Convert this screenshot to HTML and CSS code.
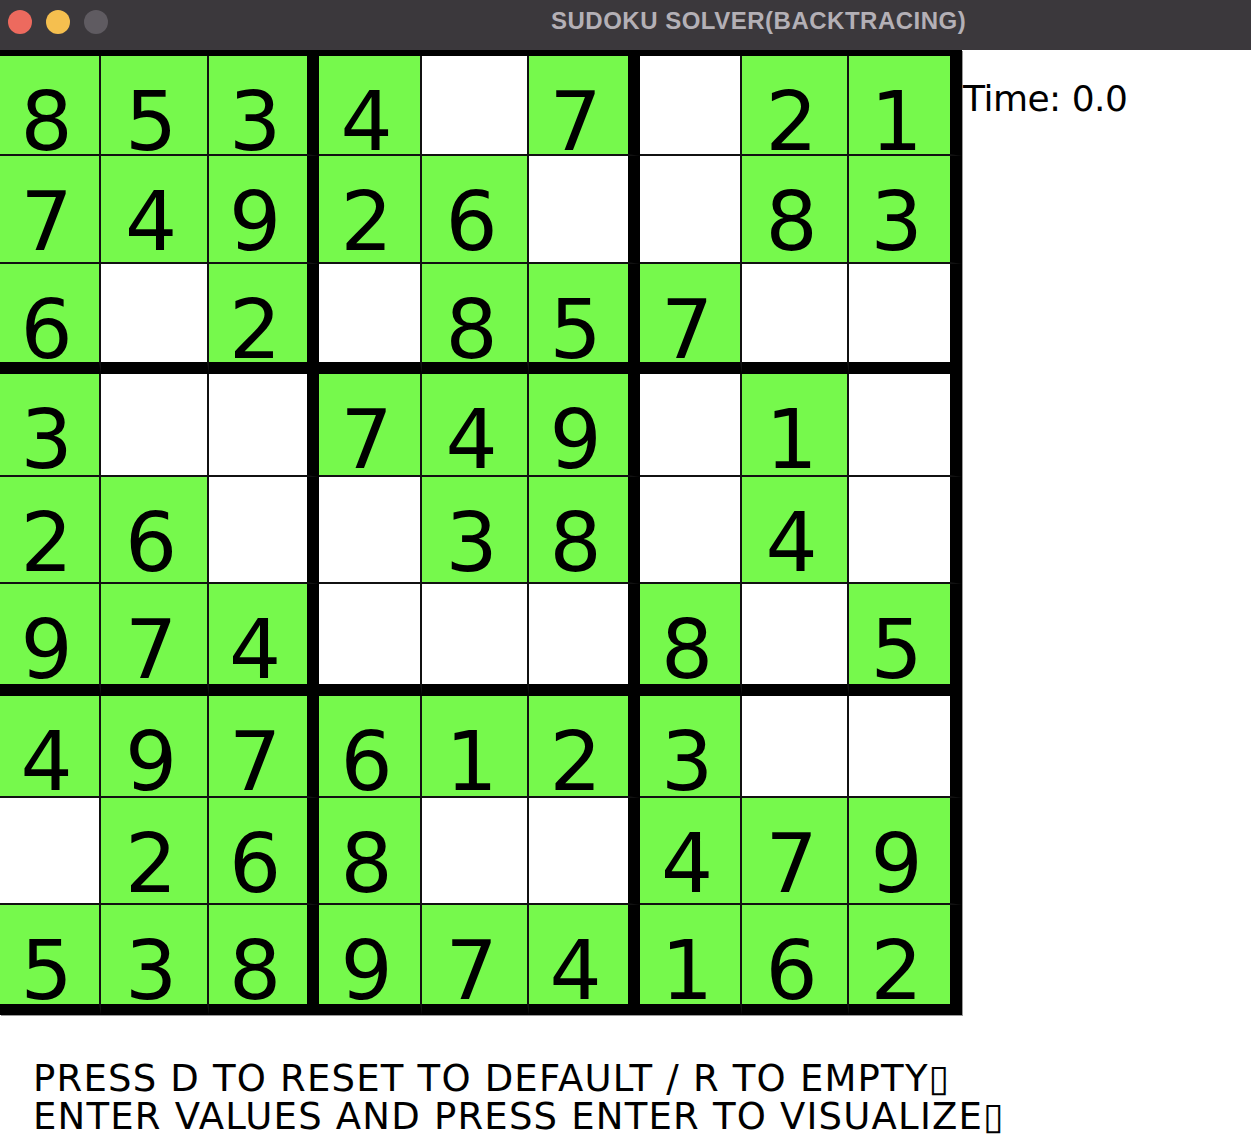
FILE: index.html
```html
<!DOCTYPE html>
<html>
<head>
<meta charset="utf-8">
<title>SUDOKU SOLVER(BACKTRACING)</title>
<link rel="stylesheet" href="styles.css">
</head>
<body>
<div class="titlebar">
  <div class="lights">
    <span class="light red"></span>
    <span class="light yellow"></span>
    <span class="light gray"></span>
  </div>
  <div class="title">SUDOKU SOLVER(BACKTRACING)</div>
</div>
<div class="main">
  <div class="board">
    <div class="c g">8</div><div class="c g">5</div><div class="c g">3</div><div class="c g">4</div><div class="c"></div><div class="c g">7</div><div class="c"></div><div class="c g">2</div><div class="c g">1</div>
    <div class="c g">7</div><div class="c g">4</div><div class="c g">9</div><div class="c g">2</div><div class="c g">6</div><div class="c"></div><div class="c"></div><div class="c g">8</div><div class="c g">3</div>
    <div class="c g">6</div><div class="c"></div><div class="c g">2</div><div class="c"></div><div class="c g">8</div><div class="c g">5</div><div class="c g">7</div><div class="c"></div><div class="c"></div>
    <div class="c g">3</div><div class="c"></div><div class="c"></div><div class="c g">7</div><div class="c g">4</div><div class="c g">9</div><div class="c"></div><div class="c g">1</div><div class="c"></div>
    <div class="c g">2</div><div class="c g">6</div><div class="c"></div><div class="c"></div><div class="c g">3</div><div class="c g">8</div><div class="c"></div><div class="c g">4</div><div class="c"></div>
    <div class="c g">9</div><div class="c g">7</div><div class="c g">4</div><div class="c"></div><div class="c"></div><div class="c"></div><div class="c g">8</div><div class="c"></div><div class="c g">5</div>
    <div class="c g">4</div><div class="c g">9</div><div class="c g">7</div><div class="c g">6</div><div class="c g">1</div><div class="c g">2</div><div class="c g">3</div><div class="c"></div><div class="c"></div>
    <div class="c"></div><div class="c g">2</div><div class="c g">6</div><div class="c g">8</div><div class="c"></div><div class="c"></div><div class="c g">4</div><div class="c g">7</div><div class="c g">9</div>
    <div class="c g">5</div><div class="c g">3</div><div class="c g">8</div><div class="c g">9</div><div class="c g">7</div><div class="c g">4</div><div class="c g">1</div><div class="c g">6</div><div class="c g">2</div>
  </div>
  <div class="time">Time: 0.0</div>
</div>
<div class="help">
  <div>PRESS D TO RESET TO DEFAULT / R TO EMPTY▯</div>
  <div>ENTER VALUES AND PRESS ENTER TO VISUALIZE▯</div>
</div>
</body>
</html>
```
FILE: styles.css
```css
html, body {
  margin: 0;
  padding: 0;
  background: #ffffff;
}
body {
  width: 1251px;
  height: 1141px;
  overflow: hidden;
  font-family: "Comic Sans MS", "DejaVu Sans", sans-serif;
  color: #000;
}
.titlebar {
  height: 50px;
  background: #3b383c;
  display: flex;
  align-items: flex-start;
  box-sizing: border-box;
  padding-top: 10px;
}
.lights {
  display: flex;
  gap: 14px;
  padding-left: 8px;
}
.light {
  width: 24px;
  height: 24px;
  border-radius: 50%;
  display: block;
}
.red { background: #ed6a5e; }
.yellow { background: #f5bf4f; }
.gray { background: #5f5b61; }
.title {
  margin-left: 443px;
  margin-top: -1px;
  font-family: "Liberation Sans", Arial, sans-serif;
  font-weight: bold;
  font-size: 24px;
  line-height: 24px;
  color: #b4b0b6;
  letter-spacing: 0.5px;
}
.main {
  display: flex;
  align-items: flex-start;
}
.board {
  width: 962px;
  box-sizing: border-box;
  border-top: 6px solid #000;
  display: grid;
  grid-template-columns: 101px 108px 110px 103px 107px 111px 102px 107px 113px;
  grid-template-rows: 100px 108px 110px 103px 107px 112px 102px 107px 110px;
  box-shadow: 1px 1px 0 #9a9a9a;
}
.c {
  box-sizing: border-box;
  background: #ffffff;
  border-right: 2px solid #111;
  border-bottom: 2px solid #111;
  display: flex;
  justify-content: center;
  align-items: flex-start;
  padding-top: 25px;
  padding-right: 6px;
  font-size: 82px;
  line-height: 1;
}
.c.g {
  background: #76f94c;
}
.c:nth-child(9n+3),
.c:nth-child(9n+6),
.c:nth-child(9n+9) {
  border-right: 12px solid #000;
}
.c:nth-child(n+19):nth-child(-n+27),
.c:nth-child(n+46):nth-child(-n+54) {
  border-bottom: 12px solid #000;
}
.c:nth-child(n+73) {
  border-bottom: 11px solid #000;
}
.time {
  padding-top: 30px;
  padding-left: 1px;
  font-size: 36px;
  line-height: 38px;
  letter-spacing: -0.5px;
  white-space: nowrap;
}
.help {
  margin-top: 45px;
  padding-left: 33px;
  font-size: 37px;
  line-height: 38px;
  letter-spacing: 1.2px;
  white-space: nowrap;
}
```
